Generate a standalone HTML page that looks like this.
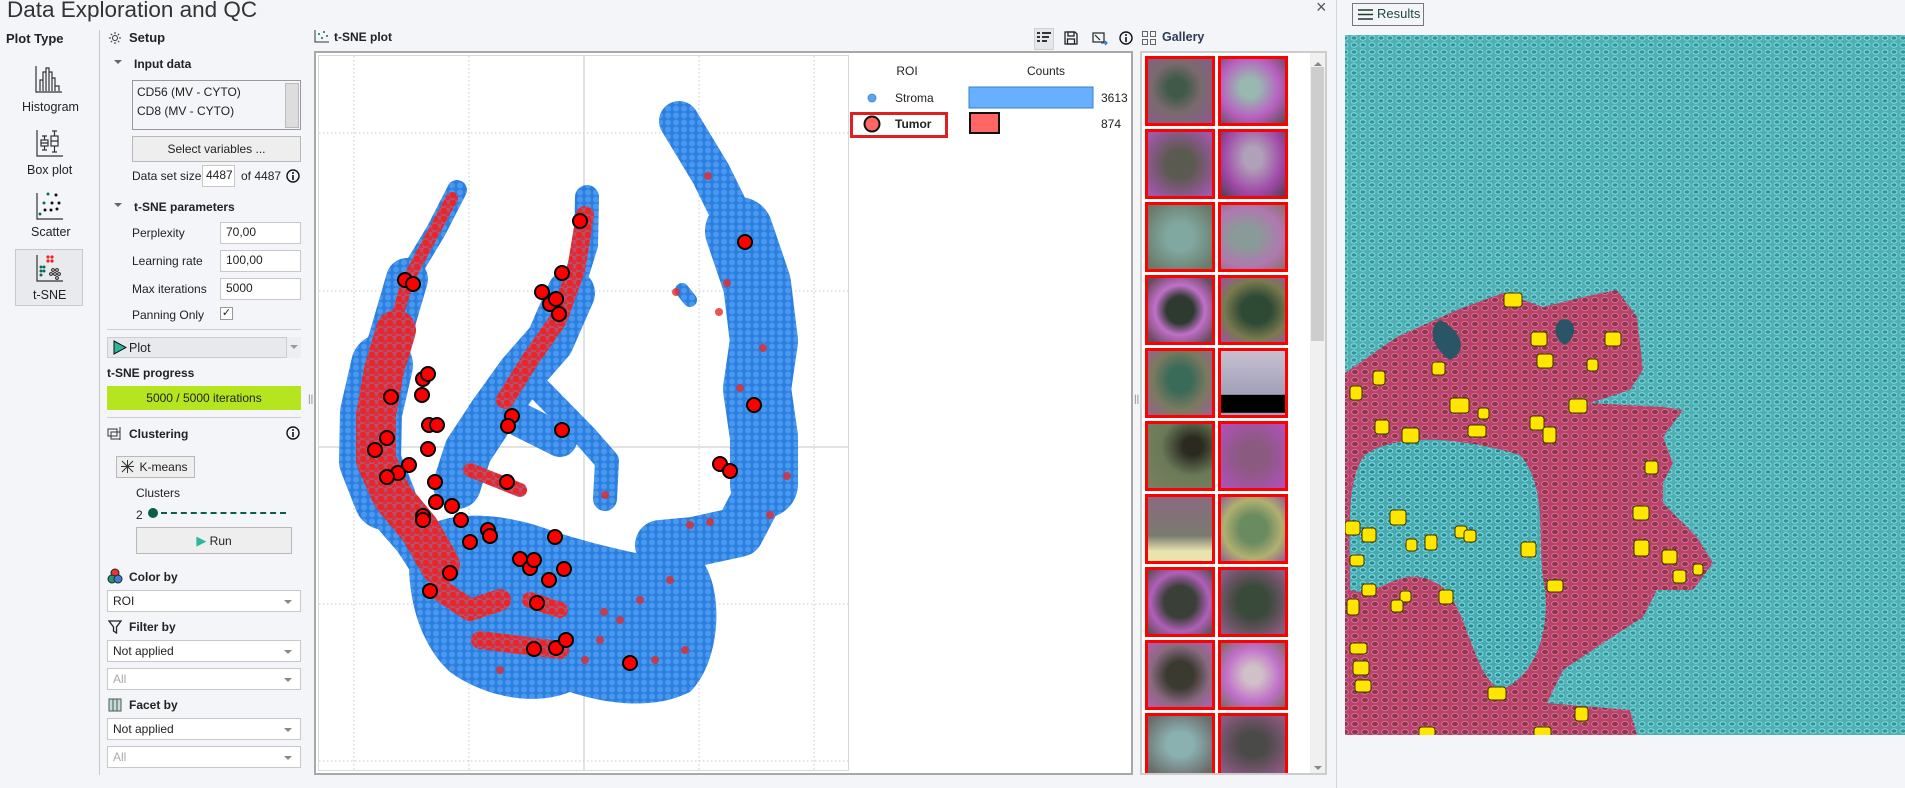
<!DOCTYPE html>
<html><head><meta charset="utf-8">
<style>
*{margin:0;padding:0;box-sizing:border-box}
body{width:1905px;height:788px;background:#f3f5f9;font-family:"Liberation Sans",sans-serif;font-size:12px;color:#222;position:relative;overflow:hidden}
.a{position:absolute;white-space:nowrap}
.b{font-weight:bold}
.inp{position:absolute;background:#fff;border:1px solid #c8c8c8;padding-left:5px;line-height:19px}
.btn{position:absolute;background:#eeeeee;border:1px solid #b8b8b8;text-align:center}
.sel{position:absolute;background:#fff;border:1px solid #c8c8c8;padding-left:5px;line-height:20px}
.sel:after{content:"";position:absolute;right:8px;top:9px;border:4px solid transparent;border-top:4px solid #888}
.g{position:absolute;width:70px;height:70px;border:3px solid #f00}
</style></head><body>

<div class="a" style="left:7px;top:-3px;font-size:22.5px;color:#333">Data Exploration and QC</div>
<div class="a" style="left:1316px;top:-3px;font-size:18px;color:#555">×</div>
<div class="a" style="left:1336px;top:0;width:1px;height:788px;background:#d0d3d8"></div>

<div class="a b" style="left:6px;top:31px;font-size:13px">Plot Type</div>
<svg class="a" style="left:34px;top:64px" width="30" height="30" viewBox="0 0 30 30" fill="none" stroke="#333" stroke-width="1.2"><path d="M2 2V28H28"/><path d="M6 27V16H9V27M9 27V8H12V27M12 27V4H15V27M15 27V8H18V27M18 27V14H21V27M21 27V22H25V27"/></svg>
<div class="a" style="left:22px;top:100px;font-size:12.5px">Histogram</div>
<svg class="a" style="left:35px;top:128px" width="30" height="30" viewBox="0 0 30 30" fill="none" stroke="#333" stroke-width="1.2"><path d="M2 2V28H28"/><rect x="6" y="12" width="7" height="6"/><path d="M9.5 8V12M9.5 18V22M7 8H12M7 22H12"/><rect x="16" y="8" width="7" height="10"/><path d="M19.5 3V8M19.5 18V24M17 3H22M17 24H22M16 13H23M6 15H13"/></svg>
<div class="a" style="left:27px;top:163px;font-size:12.5px">Box plot</div>
<svg class="a" style="left:35px;top:191px" width="30" height="30" viewBox="0 0 30 30"><path d="M2 2V28H28" fill="none" stroke="#333" stroke-width="1.2"/><g fill="#0a6b5a"><circle cx="13" cy="3" r="1.5"/><circle cx="9" cy="12" r="1.5"/><circle cx="5" cy="23" r="1.5"/></g><g fill="#111"><circle cx="21" cy="4" r="1.5"/><circle cx="17" cy="12" r="1.5"/><circle cx="24" cy="12" r="1.5"/><circle cx="10" cy="19" r="1.5"/><circle cx="16" cy="19" r="1.5"/><circle cx="22" cy="18" r="1.5"/></g></svg>
<div class="a" style="left:31px;top:225px;font-size:12.5px">Scatter</div>
<div class="a" style="left:15px;top:249px;width:68px;height:57px;background:#e9eaed;border:1px solid #c9c9c9"></div>
<svg class="a" style="left:35px;top:253px" width="30" height="30" viewBox="0 0 30 30"><path d="M2 2V28H28" fill="none" stroke="#333" stroke-width="1.2"/><g fill="#e22"><circle cx="13" cy="4" r="1.6"/><circle cx="17" cy="4" r="1.6"/><circle cx="13" cy="8" r="1.6"/><circle cx="17" cy="8" r="1.6"/></g><g fill="#0a6b5a"><circle cx="6" cy="14" r="1.5"/><circle cx="9" cy="14" r="1.5"/><circle cx="6" cy="18" r="1.5"/><circle cx="9" cy="18" r="1.5"/><circle cx="6" cy="22" r="1.5"/></g><g fill="none" stroke="#222"><circle cx="18" cy="17" r="1.4"/><circle cx="22" cy="17" r="1.4"/><circle cx="16" cy="21" r="1.4"/><circle cx="20" cy="21" r="1.4"/><circle cx="24" cy="21" r="1.4"/><circle cx="22" cy="25" r="1.4"/></g></svg>
<div class="a" style="left:33px;top:288px;font-size:12.5px">t-SNE</div>

<div class="a" style="left:99px;top:30px;width:1px;height:745px;background:#c8c8c8"></div>

<svg class="a" style="left:108px;top:31px" width="14" height="14" viewBox="0 0 14 14" fill="none" stroke="#333"><circle cx="7" cy="7" r="2.5"/><path d="M7 1V3M7 11V13M1 7H3M11 7H13M2.8 2.8L4.2 4.2M9.8 9.8L11.2 11.2M2.8 11.2L4.2 9.8M9.8 4.2L11.2 2.8"/></svg>
<div class="a b" style="left:129px;top:30px;font-size:13px">Setup</div>
<div class="a" style="left:114px;top:60px;border:4px solid transparent;border-top:4px solid #666"></div>
<div class="a b" style="left:134px;top:57px">Input data</div>
<div class="a" style="left:132px;top:80px;width:169px;height:50px;background:#f3f5f9;border:1px solid #999"></div>
<div class="a" style="left:137px;top:85px">CD56 (MV - CYTO)</div>
<div class="a" style="left:137px;top:104px">CD8 (MV - CYTO)</div>
<div class="a" style="left:285px;top:83px;width:14px;height:45px;background:#ddd;border:1px solid #bbb"></div>
<div class="btn" style="left:132px;top:136px;width:169px;height:26px;line-height:24px">Select variables ...</div>
<div class="a" style="left:132px;top:169px">Data set size</div>
<div class="inp" style="left:202px;top:165px;width:33px;height:22px;padding-left:3px">4487</div>
<div class="a" style="left:241px;top:169px">of 4487</div>
<svg class="a" style="left:286px;top:169px" width="14" height="14" viewBox="0 0 14 14"><circle cx="7" cy="7" r="6" fill="none" stroke="#111" stroke-width="1.4"/><rect x="6.2" y="6" width="1.6" height="5" fill="#111"/><circle cx="7" cy="4" r="1" fill="#111"/></svg>
<div class="a" style="left:114px;top:203px;border:4px solid transparent;border-top:4px solid #666"></div>
<div class="a b" style="left:134px;top:200px">t-SNE parameters</div>
<div class="a" style="left:132px;top:226px">Perplexity</div>
<div class="inp" style="left:220px;top:222px;width:81px;height:22px">70,00</div>
<div class="a" style="left:132px;top:254px">Learning rate</div>
<div class="inp" style="left:220px;top:250px;width:81px;height:22px">100,00</div>
<div class="a" style="left:132px;top:282px">Max iterations</div>
<div class="inp" style="left:220px;top:278px;width:81px;height:22px">5000</div>
<div class="a" style="left:132px;top:308px">Panning Only</div>
<div class="a" style="left:220px;top:307px;width:13px;height:13px;background:#fff;border:1px solid #999;font-size:11px;line-height:11px;text-align:center">✓</div>
<div class="a" style="left:107px;top:329px;width:194px;height:1px;background:#ccc"></div>
<div class="a" style="left:107px;top:337px;width:180px;height:21px;background:#e8e9ec;border:1px solid #ccc"></div>
<svg class="a" style="left:113px;top:340px" width="14" height="15"><path d="M1 1L13 7.5L1 14Z" fill="#2cb89a" stroke="#111"/></svg>
<div class="a" style="left:129px;top:341px;font-size:12.5px">Plot</div>
<div class="a" style="left:287px;top:337px;width:14px;height:21px;background:#eceef2"></div>
<div class="a" style="left:290px;top:345px;border:4px solid transparent;border-top:4px solid #999"></div>
<div class="a b" style="left:107px;top:366px">t-SNE progress</div>
<div class="a" style="left:107px;top:386px;width:194px;height:24px;background:#b4e51f;text-align:center;line-height:24px">5000 / 5000 iterations</div>
<div class="a" style="left:107px;top:417px;width:194px;height:1px;background:#ccc"></div>
<svg class="a" style="left:107px;top:426px" width="15" height="15" fill="none" stroke="#333"><rect x="1" y="3" width="9" height="7"/><rect x="4" y="6" width="9" height="7"/><path d="M13 1V14"/></svg>
<div class="a b" style="left:129px;top:427px">Clustering</div>
<svg class="a" style="left:286px;top:426px" width="14" height="14" viewBox="0 0 14 14"><circle cx="7" cy="7" r="6" fill="none" stroke="#111" stroke-width="1.4"/><rect x="6.2" y="6" width="1.6" height="5" fill="#111"/><circle cx="7" cy="4" r="1" fill="#111"/></svg>
<div class="btn" style="left:116px;top:456px;width:79px;height:22px;line-height:20px;padding-left:16px">K-means</div>
<svg class="a" style="left:120px;top:459px" width="15" height="15" stroke="#333" fill="none"><path d="M2 2L13 13M13 2L2 13M7.5 1V14M1 7.5H14"/></svg>
<div class="a" style="left:136px;top:486px">Clusters</div>
<div class="a" style="left:136px;top:508px">2</div>
<div class="a" style="left:148px;top:508px;width:10px;height:10px;border-radius:50%;background:#0b5e4c"></div>
<div class="a" style="left:161px;top:512px;width:125px;border-top:2px dashed #0b5e4c"></div>
<div class="btn" style="left:136px;top:527px;width:156px;height:27px;line-height:25px"><span style="color:#2cb89a;font-size:13px">▶</span> Run</div>
<svg class="a" style="left:107px;top:568px" width="16" height="16"><circle cx="8" cy="5" r="4" fill="#e33" stroke="#222"/><circle cx="5" cy="11" r="4" fill="#1b9a7c" stroke="#222"/><circle cx="11" cy="11" r="4" fill="#3b7fd6" stroke="#222"/></svg>
<div class="a b" style="left:129px;top:570px">Color by</div>
<div class="sel" style="left:107px;top:590px;width:194px;height:22px">ROI</div>
<svg class="a" style="left:108px;top:620px" width="14" height="14" fill="none" stroke="#222" stroke-width="1.3"><path d="M1 1H13L8.5 7V13L5.5 11V7Z"/></svg>
<div class="a b" style="left:129px;top:620px">Filter by</div>
<div class="sel" style="left:107px;top:640px;width:194px;height:22px">Not applied</div>
<div class="sel" style="left:107px;top:668px;width:194px;height:22px;color:#aaa">All</div>
<svg class="a" style="left:108px;top:698px" width="14" height="14"><rect x="1" y="1" width="12" height="12" fill="#bde0d6" stroke="#555"/><path d="M5 1V13M9 1V13" stroke="#555"/></svg>
<div class="a b" style="left:129px;top:698px">Facet by</div>
<div class="sel" style="left:107px;top:718px;width:194px;height:22px">Not applied</div>
<div class="sel" style="left:107px;top:746px;width:194px;height:22px;color:#aaa">All</div>

<div class="a" style="left:308px;top:394px;color:#888;font-size:10px">|||</div>
<div class="a" style="left:1134px;top:394px;color:#888;font-size:10px">|||</div>

<svg class="a" style="left:314px;top:30px" width="16" height="13"><path d="M1 0V12H15" fill="none" stroke="#333"/><g fill="#0a6b5a"><circle cx="5" cy="4" r="1"/><circle cx="10" cy="2" r="1"/><circle cx="8" cy="8" r="1"/><circle cx="13" cy="6" r="1"/></g></svg>
<div class="a b" style="left:334px;top:30px">t-SNE plot</div>
<div class="a" style="left:1034px;top:28px;width:20px;height:22px;background:#e6e7ea;border:1px solid #d0d0d0"></div>
<svg class="a" style="left:1037px;top:31px" width="14" height="14" fill="#333"><rect x="0" y="1" width="3" height="2"/><rect x="5" y="1" width="9" height="2"/><rect x="0" y="5" width="3" height="2"/><rect x="5" y="5" width="7" height="2"/><rect x="0" y="9" width="3" height="2"/><rect x="5" y="9" width="5" height="2"/></svg>
<svg class="a" style="left:1064px;top:31px" width="14" height="14" fill="none" stroke="#222" stroke-width="1.3"><path d="M1 1H11L13 3V13H1Z"/><rect x="4" y="1" width="6" height="4"/><rect x="3.5" y="8" width="7" height="5"/></svg>
<svg class="a" style="left:1092px;top:32px" width="16" height="14" fill="none" stroke="#222" stroke-width="1.2"><rect x="1" y="1" width="11" height="9"/><path d="M3 3L8 8"/><path d="M9 11H15M13 9L15 11L13 13" stroke="#2a6fc8"/></svg>
<svg class="a" style="left:1119px;top:31px" width="14" height="14" viewBox="0 0 14 14"><circle cx="7" cy="7" r="6" fill="none" stroke="#111" stroke-width="1.4"/><rect x="6.2" y="6" width="1.6" height="5" fill="#111"/><circle cx="7" cy="4" r="1" fill="#111"/></svg>
<svg class="a" style="left:1142px;top:31px" width="14" height="14" fill="none" stroke="#666"><rect x=".5" y=".5" width="5" height="5"/><rect x="8.5" y=".5" width="5" height="5"/><rect x=".5" y="8.5" width="5" height="5"/><rect x="8.5" y="8.5" width="5" height="5"/></svg>
<div class="a b" style="left:1162px;top:30px;color:#2e3a55;font-size:12.5px">Gallery</div>

<div class="a" style="left:314px;top:51px;width:819px;height:724px;background:#fff;border:2px solid #a8a8a8"></div>
<div class="a" style="left:318px;top:55px;width:531px;height:716px;border:1px solid #d8d8d8"></div>

<svg class="a" style="left:0;top:0" width="1905" height="788">
<defs>
<pattern id="bd" width="8" height="7" patternUnits="userSpaceOnUse">
<rect width="8" height="7" fill="#2a7fe0"/>
<circle cx="4" cy="3.5" r="3" fill="#4a98ee"/>
</pattern>
<pattern id="rd" width="9" height="8" patternUnits="userSpaceOnUse">
<rect width="9" height="8" fill="#b8506a"/>
<circle cx="3" cy="3" r="3.3" fill="#e8262a"/>
<circle cx="7.5" cy="6.5" r="2.6" fill="#d83040"/>
</pattern>
<pattern id="cells" width="9" height="7" patternUnits="userSpaceOnUse">
<rect width="9" height="7" fill="#4aa8ae"/>
<ellipse cx="4" cy="3" rx="3" ry="2.2" fill="#2c8892" stroke="#88f0f4" stroke-width=".8"/>
</pattern>
<pattern id="tcells" width="10" height="8" patternUnits="userSpaceOnUse">
<rect width="10" height="8" fill="#b8446c"/>
<ellipse cx="5" cy="4" rx="3.4" ry="2.6" fill="#8c3848" stroke="#e878a8" stroke-width=".8"/>
</pattern>
<clipPath id="img"><rect x="1345" y="35" width="560" height="700"/></clipPath>
</defs>
<g stroke="#c8c8c8" stroke-dasharray="1.5,2.5" stroke-width="1">
<path d="M354 56V770M469 56V770M699 56V770M814 56V770M319 133H848M319 291H848M319 604H848M319 761H848"/>
</g>
<path d="M584 56V770M319 447H848" stroke="#c4c4c4"/>
<g fill="none" stroke-linecap="round" stroke-linejoin="round" stroke="url(#bd)">
<path d="M457 190L436 231L407 279" stroke-width="20"/>
<path d="M407 279L393 327L382 365" stroke-width="42"/>
<path d="M382 365L371 413L370 461L385 499" stroke-width="62"/>
<path d="M385 499L418 537L440 571L470 600" stroke-width="50"/>
<path d="M587 197L586 245L571 293" stroke-width="24"/>
<path d="M571 293L550 341L521 374L493 413L468 451L457 485" stroke-width="48"/>
<path d="M540 390L586 437L607 461L605 499" stroke-width="24"/>
<path d="M520 420L560 440" stroke-width="34"/>
<path d="M679 121L711 174L739 231" stroke-width="40"/>
<path d="M739 231L757 284L764 341L757 389L764 437L764 484" stroke-width="68"/>
<path d="M764 484L739 532L693 542L660 545" stroke-width="50"/>
<path d="M682 290L690 300" stroke-width="14"/>
</g>
<path d="M410 545C425 510 490 508 550 530C610 550 660 558 705 565C725 600 718 665 690 692C650 712 600 702 570 692C530 708 480 694 450 672C420 645 405 595 410 545Z" fill="url(#bd)"/>
<g fill="none" stroke-linecap="round" stroke-linejoin="round" stroke="url(#rd)">
<path d="M452 198L432 235L408 280L394 327" stroke-width="12"/>
<path d="M396 330L384 370L376 415L376 460L392 496L420 530L440 565" stroke-width="40"/>
<path d="M585 215L576 270L558 320L530 360L505 400" stroke-width="18"/>
<path d="M440 590L470 610L500 600" stroke-width="22"/>
<path d="M480 640L560 650" stroke-width="18"/>
<path d="M530 600L560 610" stroke-width="16"/>
<path d="M470 470L520 490" stroke-width="14"/>
</g>
<g fill="#e22b2b" opacity=".8">
<circle cx="708" cy="176" r="4"/><circle cx="727" cy="283" r="4"/><circle cx="719" cy="312" r="4"/><circle cx="763" cy="348" r="4"/><circle cx="740" cy="388" r="4"/><circle cx="787" cy="476" r="4"/><circle cx="770" cy="515" r="4"/><circle cx="710" cy="522" r="4"/><circle cx="690" cy="525" r="4"/><circle cx="670" cy="580" r="4"/><circle cx="655" cy="660" r="4"/><circle cx="685" cy="650" r="4"/><circle cx="605" cy="495" r="4"/><circle cx="620" cy="620" r="4"/><circle cx="604" cy="612" r="4"/><circle cx="585" cy="660" r="4"/><circle cx="600" cy="640" r="4"/><circle cx="676" cy="292" r="4"/><circle cx="640" cy="600" r="4"/><circle cx="500" cy="670" r="4"/></g>
<g fill="#f00" stroke="#000" stroke-width="2">
<circle cx="580" cy="221" r="7"/><circle cx="745" cy="242" r="7"/><circle cx="562" cy="273" r="7"/><circle cx="542" cy="292" r="7"/><circle cx="550" cy="304" r="7"/><circle cx="556" cy="299" r="7"/><circle cx="559" cy="314" r="7"/><circle cx="405" cy="280" r="7"/><circle cx="413" cy="284" r="7"/><circle cx="423" cy="379" r="7"/><circle cx="428" cy="374" r="7"/><circle cx="391" cy="397" r="7"/><circle cx="422" cy="395" r="7"/><circle cx="429" cy="425" r="7"/><circle cx="437" cy="425" r="7"/><circle cx="512" cy="416" r="7"/><circle cx="508" cy="426" r="7"/><circle cx="562" cy="430" r="7"/><circle cx="387" cy="438" r="7"/><circle cx="375" cy="450" r="7"/><circle cx="428" cy="449" r="7"/><circle cx="754" cy="405" r="7"/><circle cx="720" cy="464" r="7"/><circle cx="730" cy="471" r="7"/><circle cx="409" cy="465" r="7"/><circle cx="398" cy="473" r="7"/><circle cx="387" cy="477" r="7"/><circle cx="435" cy="482" r="7"/><circle cx="507" cy="482" r="7"/><circle cx="436" cy="502" r="7"/><circle cx="452" cy="506" r="7"/><circle cx="423" cy="516" r="7"/><circle cx="423" cy="520" r="7"/><circle cx="461" cy="520" r="7"/><circle cx="488" cy="530" r="7"/><circle cx="490" cy="536" r="7"/><circle cx="470" cy="542" r="7"/><circle cx="555" cy="537" r="7"/><circle cx="520" cy="559" r="7"/><circle cx="530" cy="568" r="7"/><circle cx="534" cy="560" r="7"/><circle cx="564" cy="569" r="7"/><circle cx="549" cy="580" r="7"/><circle cx="450" cy="573" r="7"/><circle cx="430" cy="591" r="7"/><circle cx="537" cy="603" r="7"/><circle cx="556" cy="648" r="7"/><circle cx="566" cy="640" r="7"/><circle cx="534" cy="649" r="7"/><circle cx="630" cy="663" r="7"/>
</g>
<circle cx="872" cy="98" r="4" fill="#5aa5f0" stroke="#3c80c8" stroke-width=".8"/>
<rect x="969" y="87" width="124" height="21" fill="#66b0ff" stroke="#3b7fc4"/>
<rect x="851.5" y="113.5" width="95" height="23" fill="none" stroke="#e02020" stroke-width="3"/>
<circle cx="872" cy="124" r="7.5" fill="#ff6666" stroke="#111" stroke-width="2"/>
<rect x="970" y="113" width="29" height="20" fill="#ff6666" stroke="#111" stroke-width="2"/>

<g clip-path="url(#img)">
<rect x="1345" y="35" width="560" height="700" fill="url(#cells)"/>
<rect x="1345" y="35" width="560" height="700" fill="#7ad0c8" opacity=".15"/>
<path d="M1345 373L1397 337L1457 310L1503 293L1543 307L1583 297L1617 290L1637 317L1643 370L1630 390L1590 403L1663 407L1683 410L1663 437L1673 463L1663 483L1663 503L1697 537L1713 563L1693 590L1657 590L1643 617L1603 643L1563 670L1547 703L1630 710L1637 735L1345 735Z" fill="url(#tcells)"/>
<path d="M1365 455C1400 430 1470 440 1520 455C1550 490 1535 540 1545 590C1550 640 1530 680 1500 690C1470 670 1470 610 1440 585C1400 560 1380 600 1350 590C1350 540 1345 480 1365 455Z" fill="url(#cells)"/>
<path d="M1440 320C1460 330 1470 350 1450 360C1435 350 1425 330 1440 320Z" fill="#2a5566"/>
<path d="M1560 320C1575 315 1580 335 1565 345C1555 340 1552 328 1560 320Z" fill="#2a5566"/>
<g fill="#ffe600" stroke="#3a3200" stroke-width="1">
<rect x="1504" y="293" width="18" height="14" rx="3"/><rect x="1531" y="332" width="16" height="14" rx="3"/><rect x="1605" y="332" width="16" height="14" rx="3"/><rect x="1537" y="354" width="16" height="14" rx="3"/><rect x="1587" y="359" width="11" height="12" rx="3"/><rect x="1432" y="362" width="13" height="13" rx="3"/><rect x="1373" y="371" width="12" height="14" rx="3"/><rect x="1350" y="386" width="12" height="14" rx="3"/><rect x="1450" y="398" width="19" height="15" rx="3"/><rect x="1478" y="408" width="11" height="11" rx="3"/><rect x="1569" y="399" width="18" height="14" rx="3"/><rect x="1530" y="416" width="14" height="14" rx="3"/><rect x="1375" y="420" width="14" height="14" rx="3"/><rect x="1402" y="428" width="17" height="15" rx="3"/><rect x="1468" y="425" width="18" height="12" rx="3"/><rect x="1543" y="427" width="13" height="16" rx="3"/><rect x="1645" y="461" width="13" height="13" rx="3"/><rect x="1633" y="506" width="16" height="14" rx="3"/><rect x="1390" y="510" width="16" height="15" rx="3"/><rect x="1345" y="521" width="15" height="14" rx="3"/><rect x="1362" y="528" width="14" height="14" rx="3"/><rect x="1406" y="539" width="11" height="12" rx="3"/><rect x="1425" y="535" width="12" height="15" rx="3"/><rect x="1455" y="526" width="12" height="12" rx="3"/><rect x="1464" y="530" width="12" height="12" rx="3"/><rect x="1521" y="542" width="15" height="15" rx="3"/><rect x="1634" y="540" width="15" height="16" rx="3"/><rect x="1662" y="550" width="15" height="14" rx="3"/><rect x="1673" y="570" width="13" height="13" rx="3"/><rect x="1693" y="564" width="10" height="11" rx="3"/><rect x="1350" y="555" width="14" height="11" rx="3"/><rect x="1547" y="580" width="16" height="12" rx="3"/><rect x="1362" y="584" width="14" height="12" rx="3"/><rect x="1400" y="591" width="11" height="11" rx="3"/><rect x="1391" y="600" width="12" height="12" rx="3"/><rect x="1439" y="590" width="14" height="14" rx="3"/><rect x="1347" y="599" width="12" height="16" rx="3"/><rect x="1350" y="643" width="17" height="11" rx="3"/><rect x="1353" y="661" width="16" height="14" rx="3"/><rect x="1355" y="680" width="16" height="12" rx="3"/><rect x="1488" y="687" width="18" height="13" rx="3"/><rect x="1575" y="707" width="13" height="14" rx="3"/><rect x="1419" y="727" width="16" height="10" rx="3"/><rect x="1534" y="727" width="17" height="10" rx="3"/>
</g>
</g>
</svg>

<div class="a" style="left:907px;top:64px;transform:translateX(-50%)">ROI</div>
<div class="a" style="left:1046px;top:64px;transform:translateX(-50%)">Counts</div>
<div class="a" style="left:895px;top:91px">Stroma</div>
<div class="a b" style="left:895px;top:117px">Tumor</div>
<div class="a" style="left:1101px;top:91px">3613</div>
<div class="a" style="left:1101px;top:117px">874</div>

<div class="a" style="left:1140px;top:51px;width:187px;height:724px;background:#fff;border:2px solid #ccc"></div>
<div class="a" style="left:1310px;top:53px;width:15px;height:720px;background:#f0f0f0"></div>
<div class="a" style="left:1311px;top:67px;width:13px;height:274px;background:#cdcdcd"></div>
<div class="a" style="left:1314px;top:58px;border:4px solid transparent;border-bottom:4px solid #888"></div>
<div class="a" style="left:1314px;top:766px;border:4px solid transparent;border-top:4px solid #888"></div>
<div class="g" style="left:1145px;top:56px;background:radial-gradient(ellipse at 45% 45%,#3f5a48 18%,#7a6a6e 50%,#8a5a8a 95%)"></div>
<div class="g" style="left:1218px;top:56px;background:radial-gradient(ellipse at 45% 45%,#98b8b0 20%,#b860c0 60%,#5a4a50 100%)"></div>
<div class="g" style="left:1145px;top:129px;background:radial-gradient(ellipse at 50% 50%,#5a5a50 30%,#a058a8 90%)"></div>
<div class="g" style="left:1218px;top:129px;background:radial-gradient(ellipse at 50% 40%,#b0a0b8 20%,#a048a8 65%,#504050 100%)"></div>
<div class="g" style="left:1145px;top:202px;background:radial-gradient(ellipse at 50% 50%,#80a8a0 30%,#6a7868 90%)"></div>
<div class="g" style="left:1218px;top:202px;background:radial-gradient(ellipse at 40% 50%,#8a9a98 25%,#b078b0 65%,#8a7068 100%)"></div>
<div class="g" style="left:1145px;top:275px;background:radial-gradient(ellipse at 50% 50%,#2e3a30 30%,#c070c8 55%,#6a4a60 90%)"></div>
<div class="g" style="left:1218px;top:275px;background:radial-gradient(ellipse at 55% 50%,#2e4a34 30%,#7a7a50 65%,#a050a0 100%)"></div>
<div class="g" style="left:1145px;top:348px;background:radial-gradient(ellipse at 50% 45%,#3a6a58 25%,#7a7a60 60%,#9a6090 100%)"></div>
<div class="g" style="left:1218px;top:348px;background:linear-gradient(#c8c0d0 0,#a0a0b8 68%,#000 69%,#000 96%,#a8a0c0 97%)"></div>
<div class="g" style="left:1145px;top:421px;background:radial-gradient(ellipse at 70% 35%,#2a2a20 15%,#6a7a58 50%,#7a8060 100%)"></div>
<div class="g" style="left:1218px;top:421px;background:radial-gradient(ellipse at 50% 50%,#8a5a80 30%,#b050b8 95%)"></div>
<div class="g" style="left:1145px;top:494px;background:linear-gradient(#8a6a80,#7a7a70 60%,#e8e4b0 85%)"></div>
<div class="g" style="left:1218px;top:494px;background:radial-gradient(ellipse at 50% 50%,#6a8a60 30%,#b0b070 65%,#906090 100%)"></div>
<div class="g" style="left:1145px;top:567px;background:radial-gradient(ellipse at 50% 50%,#3a4038 35%,#b060b8 65%,#5a4a50 100%)"></div>
<div class="g" style="left:1218px;top:567px;background:radial-gradient(ellipse at 50% 50%,#3a4a3a 35%,#8a5a80 90%)"></div>
<div class="g" style="left:1145px;top:640px;background:radial-gradient(ellipse at 50% 50%,#3a3a30 30%,#8a6a80 65%,#b060b0 100%)"></div>
<div class="g" style="left:1218px;top:640px;background:radial-gradient(ellipse at 50% 50%,#d0c0c8 20%,#c070c8 60%,#7a6a60 100%)"></div>
<div class="g" style="left:1145px;top:713px;height:60px;border-bottom:none;background:radial-gradient(ellipse at 50% 50%,#8ab0b0 30%,#6a6a68 90%)"></div>
<div class="g" style="left:1218px;top:713px;height:60px;border-bottom:none;background:radial-gradient(ellipse at 50% 50%,#4a4a48 30%,#8a5a80 90%)"></div>

<div class="a" style="left:1352px;top:3px;width:72px;height:23px;border:1px solid #777;background:#f3f5f9"></div>
<svg class="a" style="left:1358px;top:9px" width="15" height="11" stroke="#1a3a2a" stroke-width="1.6"><path d="M0 1H15M0 5.5H15M0 10H15"/></svg>
<div class="a" style="left:1377px;top:6px;color:#1d4a3a;font-size:13px">Results</div>
</body></html>
